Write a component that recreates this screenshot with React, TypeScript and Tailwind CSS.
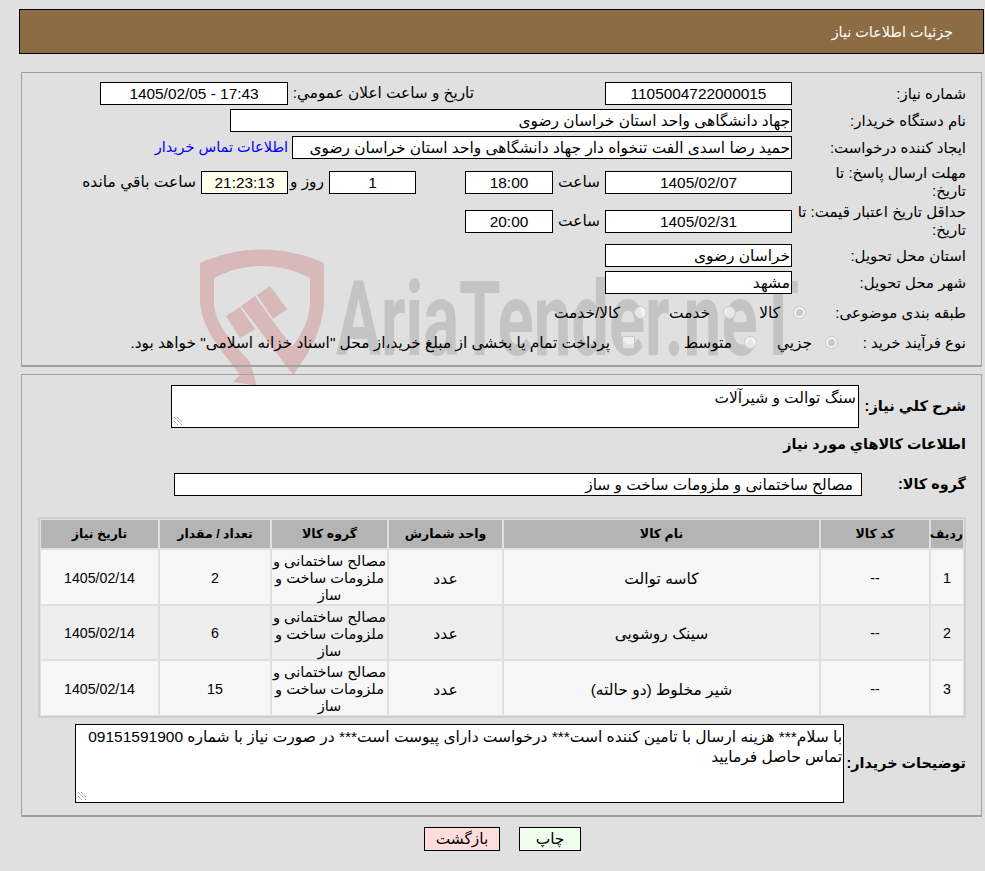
import type { ReactNode } from "react";

const goods = [
  { id: 1, name: "کاسه توالت", qty: 2 },
  { id: 2, name: "سینک روشویی", qty: 6 },
  { id: 3, name: "شیر مخلوط (دو حالته)", qty: 15 },
];

function Box({ className = "", bg = "bg-white", children }: { className?: string; bg?: string; children?: ReactNode }) {
  return (
    <div className={`h-[23px] shrink-0 border border-black text-[15.4px] leading-[21px] whitespace-nowrap overflow-hidden ${bg} ${className}`}>
      {children}
    </div>
  );
}

function Label({ className = "w-[174px]", children }: { className?: string; children: ReactNode }) {
  return <div className={`shrink-0 text-[15px] leading-[18px] ${className}`}>{children}</div>;
}

function Radio({ on }: { on?: boolean }) {
  return (
    <span className="w-[26px] flex justify-center">
      <span className="relative inline-block w-[13px] h-[13px] rounded-full bg-white/60 border border-[#c8c8c8]">
        {on && <span className="absolute inset-[2px] rounded-full bg-[#c8c8c8]" />}
      </span>
    </span>
  );
}

function Watermark() {
  return (
    <div dir="ltr" className="absolute -z-10 left-0 top-0 w-[985px] h-[400px] overflow-hidden pointer-events-none">
      <svg width="130" height="145" viewBox="198 245 130 145" className="absolute left-[198px] top-[245px]">
        <g fill="#d8b8b8">
          <path d="M200 263 C240 245 284 245 324 263 L310 278 C280 262 244 262 214 278 L214 305 C216 325 232 342 250 362 L257 386 L233 382 L240 375 C222 350 201 330 200 300 Z" />
          <path d="M324 263 L324 300 C323 330 310 352 293 375 L288 352 C302 335 310 320 310 300 L310 278 Z" />
          <path d="M226 316 L240 307 L255 329 L240 338 Z" />
          <path d="M241 306 L255 296 L272 320 L296 352 L293 375 L258 328 Z" />
          <path d="M257 295 L270 286 L287 309 L273 319 Z" />
        </g>
      </svg>
      <div className="absolute left-[336px] top-[260px] text-[#c4c4c4] font-['Roboto'] font-bold text-[103px] leading-[120px] origin-left scale-x-[0.65] whitespace-nowrap">
        AriaTender.neT
      </div>
    </div>
  );
}

function Grip() {
  return (
    <svg width="10" height="10" viewBox="0 0 10 10" className="absolute left-px bottom-px">
      <path d="M1 1 L9 9 M1 5 L5 9 M4 1 L9 6" stroke="#707070" strokeWidth="1" strokeDasharray="1 1" fill="none" />
    </svg>
  );
}

function Th({ children }: { children: ReactNode }) {
  return <div className="h-[28px] bg-[#b4b4b4] font-bold text-[12.5px] text-center leading-[28px] whitespace-nowrap">{children}</div>;
}

function Row({ id, name, qty }: { id: number; name: string; qty: number }) {
  const bg = id === 2 ? "bg-[#eeeeee]" : "bg-[#f7f7f7]";
  const height = id === 2 ? "h-[53px]" : "h-[54px]";
  const cell = `${height} ${bg} pt-[3px] flex items-center justify-center text-center whitespace-nowrap`;
  return (
    <>
      <div className={`${cell} text-[14.2px]`}>{id}</div>
      <div className={`${cell} text-[14.2px]`}>--</div>
      <div className={`${cell} text-[15.5px]`}>{name}</div>
      <div className={`${cell} text-[15.5px]`}>عدد</div>
      <div className={`${cell} text-[14.6px] leading-[17px]`}>
        <span>
          مصالح ساختمانی و
          <br />
          ملزومات ساخت و
          <br />
          ساز
        </span>
      </div>
      <div className={`${cell} text-[14.2px]`}>{qty}</div>
      <div className={`${cell} text-[14.2px]`}>1405/02/14</div>
    </>
  );
}

export default function App() {
  return (
    <div dir="rtl" className="relative isolate w-[985px] h-[871px] overflow-hidden bg-[#e0e0e0] text-black pt-[9px] pr-px pl-[19px] font-['Liberation_Sans','DejaVu_Sans',sans-serif]">
      <Watermark />
      <div className="h-[45px] bg-[#8c6d43] border border-black text-white text-[14.4px] leading-[44px] pr-[30px]">
        جزئیات اطلاعات نیاز
      </div>

      <div className="mt-[18px] mx-[2px] h-[295px] border border-[#a0a0a0] border-b-2 pt-[9px] pr-[15px]">
        <div className="flex flex-col">
          <div className="flex items-center h-[23px]">
            <Label>شماره نیاز:</Label>
            <Box className="w-[187px] text-center text-[14.7px]">1105004722000015</Box>
            <div className="w-[131px] shrink-0" />
            <div className="w-[186px] shrink-0 text-[15.3px] whitespace-nowrap">تاریخ و ساعت اعلان عمومي:</div>
            <Box className="w-[188px] text-center">17:43 - 1405/02/05</Box>
          </div>
          <div className="flex items-center mt-[4px]">
            <Label>نام دستگاه خریدار:</Label>
            <Box className="w-[562px] pr-px">جهاد دانشگاهی واحد استان خراسان رضوی</Box>
          </div>
          <div className="flex items-center mt-[4px]">
            <Label>ایجاد کننده درخواست:</Label>
            <Box className="w-[500px] pr-px">حمید رضا اسدی الفت تنخواه دار جهاد دانشگاهی واحد استان خراسان رضوی</Box>
            <span className="mr-[4px] text-[14.5px] text-[#0000ff] whitespace-nowrap">اطلاعات تماس خریدار</span>
          </div>
          <div className="flex items-center mt-[8px] h-[30px]">
            <Label>
              مهلت ارسال پاسخ: تا
              <br />
              تاریخ:
            </Label>
            <Box className="w-[187px] text-center">1405/02/07</Box>
            <span className="mr-[5px] w-[47px] text-[15.4px]">ساعت</span>
            <Box className="w-[88px] text-center">18:00</Box>
            <div className="w-[49px] shrink-0" />
            <Box className="w-[87px] text-center">1</Box>
            <span className="mr-[5px] w-[36px] text-[15.4px] whitespace-nowrap">روز و</span>
            <Box bg="bg-[#ffffee]" className="w-[87px] text-center">21:23:13</Box>
            <span className="mr-[5px] text-[15.5px] whitespace-nowrap">ساعت باقي مانده</span>
          </div>
          <div className="flex items-center mt-[7px] h-[34px]">
            <Label>
              حداقل تاریخ اعتبار قیمت: تا
              <br />
              تاریخ:
            </Label>
            <Box className="w-[187px] text-center">1405/02/31</Box>
            <span className="mr-[5px] w-[47px] text-[15.4px]">ساعت</span>
            <Box className="w-[88px] text-center">20:00</Box>
          </div>
          <div className="flex items-center mt-[6px]">
            <Label>استان محل تحویل:</Label>
            <Box className="w-[187px] pr-px">خراسان رضوی</Box>
          </div>
          <div className="flex items-center mt-[4px]">
            <Label>شهر محل تحویل:</Label>
            <Box className="w-[187px] pr-px">مشهد</Box>
          </div>
          <div className="flex items-center mt-[7px] h-[23px] text-[15.4px]">
            <Label className="w-[154px]">طبقه بندی موضوعی:</Label>
            <Radio on />
            <span className="w-[44px] pr-[6px]">کالا</span>
            <Radio />
            <span className="w-[63px] pr-[6px]">خدمت</span>
            <Radio />
            <span className="pr-[7px] whitespace-nowrap">کالا/خدمت</span>
          </div>
          <div className="flex items-center mt-[7px] h-[23px] text-[15.4px] whitespace-nowrap">
            <Label className="w-[122px]">نوع فرآیند خرید :</Label>
            <Radio on />
            <span className="w-[55px] pr-[6px]">جزیي</span>
            <Radio />
            <span className="w-[96px] pr-[5px]">متوسط</span>
            <span className="w-[26px] flex justify-center">
              <span className="w-[13px] h-[13px] bg-white/50 border border-[#c8c8c8] rounded-[2px]" />
            </span>
            <span className="pr-[5px]">پرداخت تمام یا بخشی از مبلغ خرید،از محل "اسناد خزانه اسلامی" خواهد بود.</span>
          </div>
        </div>
      </div>

      <div className="mt-[7px] mx-[2px] h-[443px] border border-[#a0a0a0] border-b-2 pt-[10px] pr-[15px]">
        <div className="flex items-center">
          <div className="w-[107px] shrink-0 font-bold text-[14.6px] whitespace-nowrap">شرح کلي نیاز:</div>
          <div className="relative w-[688px] h-[43px] border border-black bg-white text-[15.4px] leading-[20px] pr-[2px] pt-[2px]">
            سنگ توالت و شیرآلات
            <Grip />
          </div>
        </div>
        <div className="font-bold text-[14.4px] mt-[4px] leading-[24px]">اطلاعات کالاهاي مورد نیاز</div>
        <div className="flex items-center mt-[17px]">
          <div className="w-[104px] shrink-0 font-bold text-[14.4px]">گروه کالا:</div>
          <Box className="w-[688px] pr-[8px]">مصالح ساختمانی و ملزومات ساخت و ساز</Box>
        </div>

        <div className="mt-[21px] border-2 border-[#cfcfcf] p-px w-[928px]">
          <div className="grid grid-cols-[32px_108px_315px_113px_115px_110px_117px] gap-[2px]">
            <Th>ردیف</Th>
            <Th>کد کالا</Th>
            <Th>نام کالا</Th>
            <Th>واحد شمارش</Th>
            <Th>گروه کالا</Th>
            <Th>تعداد / مقدار</Th>
            <Th>تاریخ نیاز</Th>
            {goods.map((g) => (
              <Row key={g.id} id={g.id} name={g.name} qty={g.qty} />
            ))}
          </div>
        </div>

        <div className="flex items-center mt-[6px]">
          <div className="w-[122px] shrink-0 font-bold text-[14.4px] whitespace-nowrap">توضیحات خریدار:</div>
          <div className="relative w-[769px] h-[79px] border border-black bg-white text-[15.5px] leading-[20px] pr-px pt-[2px]">
            با سلام*** هزینه ارسال با تامین کننده است*** درخواست دارای پیوست است*** در صورت نیاز با شماره 09151591900 تماس حاصل فرمایید
            <Grip />
          </div>
        </div>
      </div>

      <div className="flex justify-center gap-[19px] mt-[10px] pl-[2px] text-[15.4px]">
        <button className="w-[62px] h-[24px] border border-black bg-[#eeffee] leading-[20px]">چاپ</button>
        <button className="w-[76px] h-[24px] border border-black bg-[#ffdddd] leading-[20px]">بازگشت</button>
      </div>
    </div>
  );
}
